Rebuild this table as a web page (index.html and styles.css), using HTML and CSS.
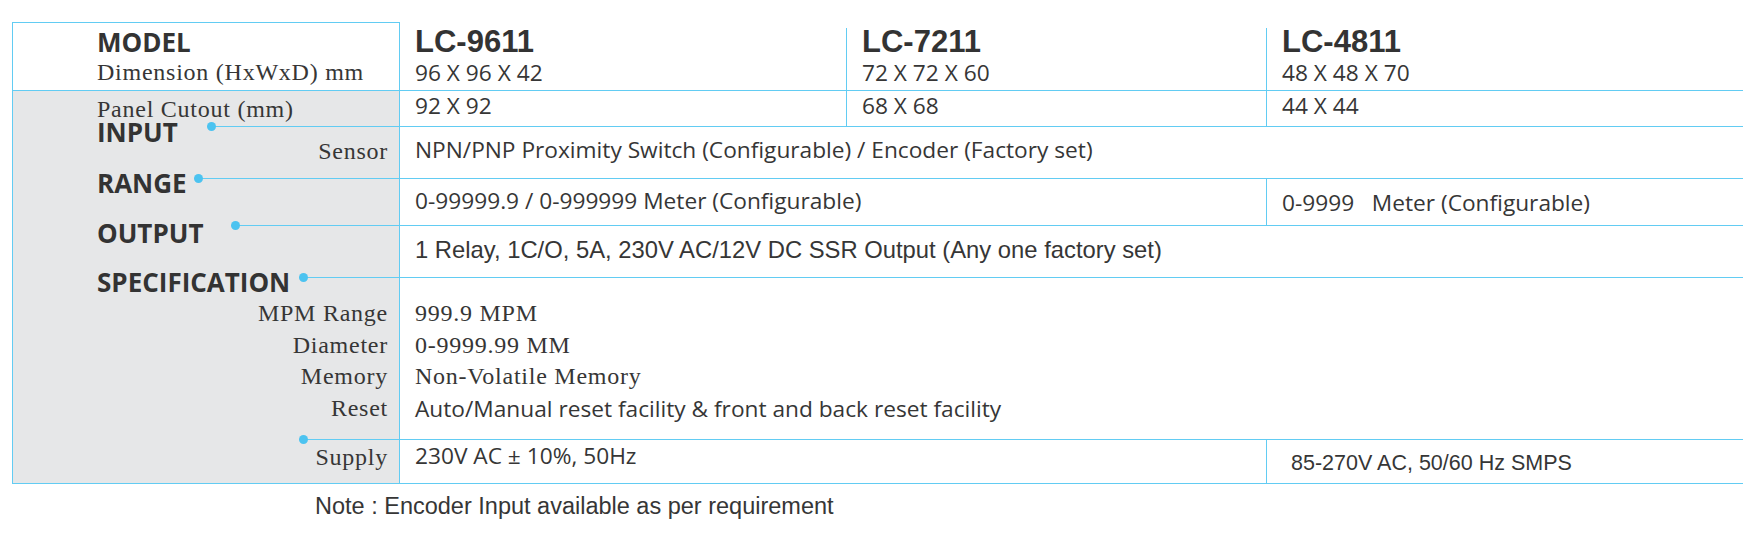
FILE: index.html
```html
<!DOCTYPE html>
<html lang="en">
<head>
<meta charset="utf-8">
<title>LC Series Specification</title>
<link rel="stylesheet" href="styles.css">
</head>
<body>
<div class="sheet">
  <div class="grid">
    <!-- header -->
    <div class="lab lab-head">
      <div class="h">MODEL</div>
      <div class="serif dim">Dimension (HxWxD) mm</div>
    </div>
    <div class="d hd">
      <div class="model">LC-9611</div>
      <div class="myr dims">96 X 96 X 42</div>
    </div>
    <div class="d hd vl">
      <div class="model">LC-7211</div>
      <div class="myr dims">72 X 72 X 60</div>
    </div>
    <div class="d hd vl">
      <div class="model">LC-4811</div>
      <div class="myr dims">48 X 48 X 70</div>
    </div>

    <!-- panel cutout -->
    <div class="lab lab-panel">
      <div class="serif panel-l">Panel Cutout (mm)</div>
    </div>
    <div class="d row panel"><div class="myr">92 X 92</div></div>
    <div class="d row panel vl"><div class="myr">68 X 68</div></div>
    <div class="d row panel vl"><div class="myr">44 X 44</div></div>

    <!-- input -->
    <div class="lab">
      <div class="hrow hr-input"><span class="h w-input">INPUT</span><span class="conn"></span></div>
      <div class="serif right sensor-l">Sensor</div>
    </div>
    <div class="d row span3 sensor"><div class="myr">NPN/PNP Proximity Switch (Configurable) / Encoder (Factory set)</div></div>

    <!-- range -->
    <div class="lab">
      <div class="hrow hr-range"><span class="h w-range">RANGE</span><span class="conn"></span></div>
    </div>
    <div class="d row span2 range"><div class="myr">0-99999.9 / 0-999999 Meter (Configurable)</div></div>
    <div class="d row vl range range-3"><div class="myr pre">0-9999   Meter (Configurable)</div></div>

    <!-- output -->
    <div class="lab">
      <div class="hrow hr-output"><span class="h w-output">OUTPUT</span><span class="conn"></span></div>
    </div>
    <div class="d row span3 output"><div class="arial">1 Relay, 1C/O, 5A, 230V AC/12V DC SSR Output (Any one factory set)</div></div>

    <!-- specification -->
    <div class="lab">
      <div class="hrow hr-spec"><span class="h w-spec">SPECIFICATION</span><span class="conn"></span></div>
      <div class="spec-list">
        <div class="serif right li">MPM Range</div>
        <div class="serif right li">Diameter</div>
        <div class="serif right li">Memory</div>
        <div class="serif right li">Reset</div>
      </div>
    </div>
    <div class="d row span3 spec">
      <div class="serif li">999.9 MPM</div>
      <div class="serif li">0-9999.99 MM</div>
      <div class="serif li">Non-Volatile Memory</div>
      <div class="myr li">Auto/Manual reset facility &amp; front and back reset facility</div>
    </div>

    <!-- supply -->
    <div class="lab lab-last">
      <div class="hrow"><span class="h w-spec"></span><span class="conn"></span></div>
      <div class="serif right supply-l">Supply</div>
    </div>
    <div class="d row last span2 supply"><div class="myr">230V AC ± 10%, 50Hz</div></div>
    <div class="d row last vl supply-3"><div class="smps">85-270V AC, 50/60 Hz SMPS</div></div>
  </div>
  <p class="note">Note : Encoder Input available as per requirement</p>
</div>
</body>
</html>
```

FILE: styles.css
```css
:root {
  --line: #62ccf3;
  --dot: #4cc3f0;
  --grey: #e6e7e8;
  --ink: #363636;
}

* { box-sizing: border-box; }

body {
  margin: 0;
  background: #ffffff;
  color: var(--ink);
  font-family: "Open Sans", sans-serif;
}

.sheet {
  padding: 22px 0 0 12px;
}

.grid {
  display: grid;
  grid-template-columns: 388px 446px 420px 477px;
  grid-template-rows: 68px 36px 52px 47px 52px 162px 45px;
}

/* ---------- label column ---------- */
.lab {
  background: var(--grey);
  border-left: 1px solid var(--line);
  border-right: 1px solid var(--line);
  padding: 0 11px 0 84px;
}

.lab-head {
  background: #ffffff;
  border-top: 1px solid var(--line);
  padding-top: 9px;
}

.lab-panel {
  border-top: 1px solid var(--line);
  padding-top: 4px;
}

.panel-l { line-height: 24px; }

.lab-last {
  border-bottom: 1px solid var(--line);
}

.h {
  display: block;
  font-family: "Open Sans", sans-serif;
  font-weight: 700;
  font-size: 26px;
  line-height: 20px;
  white-space: nowrap;
  flex-shrink: 0;
  color: #333333;
}

.serif {
  font-family: "Liberation Serif", "Times New Roman", serif;
  font-size: 24px;
  letter-spacing: 0.75px;
  line-height: 28px;
  white-space: nowrap;
}

.right { text-align: right; }

.dim { margin-top: 6px; }

.hrow {
  display: flex;
  margin-right: -11px;
}

.conn {
  flex: 1;
  height: 1px;
  background: var(--line);
  position: relative;
}

.conn::before {
  content: "";
  position: absolute;
  left: -4px;
  top: -4px;
  width: 9px;
  height: 9px;
  border-radius: 50%;
  background: var(--dot);
}

.w-input { width: 114px; }
.w-range { width: 101px; }
.w-output { width: 138px; }
.w-spec { width: 206px; }

.hr-input { margin-top: -4px; }
.hr-input .conn { margin-top: 4px; }
.hr-range { margin-top: -5px; }
.hr-range .conn { margin-top: 5px; }
.hr-output { margin-top: -2px; }
.hr-output .conn { margin-top: 2px; }
.hr-spec { margin-top: -5px; }
.hr-spec .conn { margin-top: 5px; }

.sensor-l {
  margin-top: -2px;
  line-height: 22px;
}

.spec-list { margin-top: 6px; }

.li { line-height: 31.5px; }

.supply-l { margin-top: 3px; }

/* ---------- data columns ---------- */
.d {
  padding-left: 15px;
  white-space: nowrap;
}

.vl { border-left: 1px solid var(--line); }

.row { border-top: 1px solid var(--line); }

.last { border-bottom: 1px solid var(--line); }

.span3 { grid-column: span 3; }
.span2 { grid-column: span 2; }

.hd { margin-top: 6px; }

.model {
  font-family: "Liberation Sans", Arial, sans-serif;
  font-weight: 700;
  font-size: 31px;
  line-height: 28px;
  color: #333333;
}

.myr {
  font-family: "Open Sans", sans-serif;
  font-size: 22.7px;
  line-height: 26px;
}

.myr.li { line-height: 31.5px; }

.pre { white-space: pre; }

.dims { margin-top: 4px; }

.panel { padding-top: 2px; }
.sensor { padding-top: 10px; }
.range { padding-top: 9px; }
.range-3 { padding-top: 11px; }

.arial {
  font-family: "Liberation Sans", Arial, sans-serif;
  font-size: 23.8px;
  line-height: 28px;
}

.output { padding-top: 10px; }

.spec { padding-top: 20px; }

.supply { padding-top: 3px; }

.supply-3 { padding-top: 10px; padding-left: 24px; }

.smps {
  font-family: "Liberation Sans", Arial, sans-serif;
  font-size: 21.5px;
  line-height: 26px;
}

.note {
  margin: 8px 0 0 303px;
  font-family: "Liberation Sans", Arial, sans-serif;
  font-size: 23.5px;
  line-height: 28px;
}
```
